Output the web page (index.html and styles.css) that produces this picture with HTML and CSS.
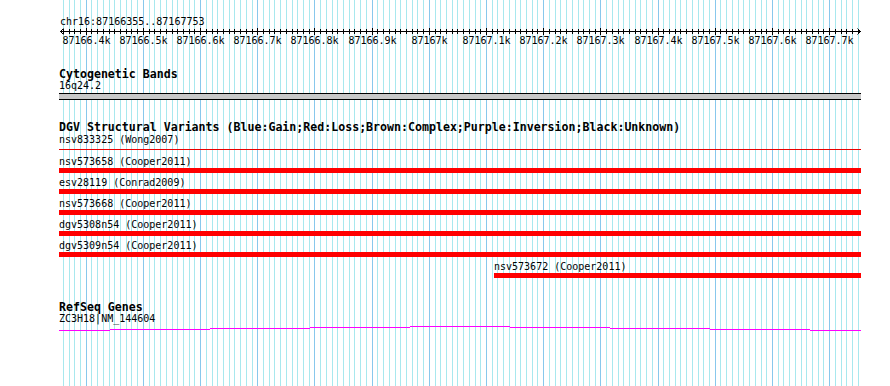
FILE: index.html
```html
<!DOCTYPE html>
<html lang="en">
<head>
  <meta charset="UTF-8" />
  <title>chr16:87166355..87167753</title>
  <link rel="stylesheet" href="styles.css">
</head>
<body>

<div class="browser">
  <svg class="grid" id="grid" width="890" height="386"></svg>

  <div class="tracks">
    <div class="ruler-track">
      <div class="loc">chr16:87166355..87167753</div>
      <svg class="ruler" id="ruler" width="803" height="19"></svg>
    </div>

    <section class="track cyto">
      <h2>Cytogenetic Bands</h2>
      <div class="label">16q24.2</div>
      <div class="band"></div>
    </section>

    <section class="track dgv">
      <h2>DGV Structural Variants (Blue:Gain;Red:Loss;Brown:Complex;Purple:Inversion;Black:Unknown)</h2>
      <div class="feature">
        <div class="label">nsv833325 (Wong2007)</div>
        <div class="bar thin"></div>
      </div>
      <div class="feature">
        <div class="label">nsv573658 (Cooper2011)</div>
        <div class="bar"></div>
      </div>
      <div class="feature">
        <div class="label">esv28119 (Conrad2009)</div>
        <div class="bar"></div>
      </div>
      <div class="feature">
        <div class="label">nsv573668 (Cooper2011)</div>
        <div class="bar"></div>
      </div>
      <div class="feature">
        <div class="label">dgv5308n54 (Cooper2011)</div>
        <div class="bar"></div>
      </div>
      <div class="feature">
        <div class="label">dgv5309n54 (Cooper2011)</div>
        <div class="bar"></div>
      </div>
      <div class="feature" style="margin-left: 435px;">
        <div class="label">nsv573672 (Cooper2011)</div>
        <div class="bar"></div>
      </div>
    </section>

    <section class="track refseq">
      <h2>RefSeq Genes</h2>
      <div class="label">ZC3H18|NM_144604</div>
      <svg class="gene" width="803" height="8" shape-rendering="crispEdges">
        <rect x="0" y="6" width="51" height="1"/>
        <rect x="51" y="5" width="100" height="1"/>
        <rect x="151" y="4" width="100" height="1"/>
        <rect x="251" y="3" width="100" height="1"/>
        <rect x="351" y="2" width="100" height="1"/>
        <rect x="451" y="3" width="100" height="1"/>
        <rect x="551" y="4" width="100" height="1"/>
        <rect x="651" y="5" width="100" height="1"/>
        <rect x="751" y="6" width="51" height="1"/>
      </svg>
    </section>
  </div>
</div>

<script src="script.js"></script>
</body>
</html>
```

FILE: styles.css
```css
body {
  margin: 0;
  background: #fff;
  color: #000;
  font-family: "DejaVu Sans Mono", monospace;
}

.browser {
  position: relative;
  width: 890px;
  height: 386px;
  overflow: hidden;
}

/* background grid, sits under the tracks */
.grid {
  position: absolute;
  left: 0;
  top: 0;
}

.grid line {
  stroke: #a8e8ee;
  stroke-width: 1;
}

.grid line.major {
  stroke: #88c8ec;
}

.tracks {
  position: relative;
  width: 802px;
  padding-left: 59px;
}

.loc {
  margin-top: 16px;
  padding-left: 1px;
  font-size: 10px;
  line-height: 12px;
}

.ruler {
  display: block;
}

.ruler line,
.ruler polyline {
  stroke: #000;
  stroke-width: 1;
  fill: none;
}

.ruler text {
  font-family: "DejaVu Sans Mono", monospace;
  font-size: 10px;
  fill: #000;
}

.track h2 {
  margin: 0;
  font-size: 11.6px;
  line-height: 12px;
  font-weight: bold;
}

.label {
  font-size: 10px;
  line-height: 12px;
  white-space: nowrap;
}

.cyto {
  margin-top: 21px;
}

.band {
  margin-top: 1px;
  height: 5px;
  background: #c8c8c8;
  border-top: 1px solid #000;
  border-bottom: 1px solid #000;
}

.dgv {
  margin-top: 21px;
}

.dgv h2 {
  margin-bottom: 2px;
}

.feature {
  padding-bottom: 5px;
}

.feature .label {
  line-height: 10px;
}

.bar {
  height: 5px;
  margin-top: 1px;
  background: #ff0000;
}

.bar.thin {
  height: 1px;
  margin: 4px 0 2px;
  background: #e80000;
}

.refseq {
  margin-top: 18px;
}

.refseq .label {
  margin-top: 1px;
  line-height: 10px;
}

.gene {
  display: block;
}

.gene rect {
  fill: #ff00ff;
}
```

FILE: script.js
```js
const start = 87166355;
const end = 87167753;
const left = 60;
const width = 800;
const svgNS = 'http://www.w3.org/2000/svg';

const grid = document.getElementById('grid');
const ruler = document.getElementById('ruler');

const toX = bp => left + (bp - start) * width / (end - start + 1);

const add = (parent, tag, attrs, text) => {
  const el = document.createElementNS(svgNS, tag);
  Object.keys(attrs).forEach(k => el.setAttribute(k, attrs[k]));
  if (text) el.textContent = text;
  parent.appendChild(el);
  return el;
};

// ruler is offset 59px from page left
const rx = x => x - 59;

add(ruler, 'line', { x1: rx(60), y1: 3.5, x2: rx(861), y2: 3.5, 'shape-rendering': 'crispEdges' });
add(ruler, 'polyline', { points: `${rx(63.5)},0.5 ${rx(60.5)},3.5 ${rx(63.5)},6.5` });
add(ruler, 'polyline', { points: `${rx(857.5)},0.5 ${rx(860.5)},3.5 ${rx(857.5)},6.5` });

for (let bp = Math.ceil(start / 10) * 10; bp <= end; bp += 10) {
  const x = Math.round(toX(bp)) + 0.5;
  const major = bp % 100 === 0;

  const gl = add(grid, 'line', { x1: x, y1: 0, x2: x, y2: 386, 'shape-rendering': 'crispEdges' });
  if (major) gl.setAttribute('class', 'major');

  add(ruler, 'line', {
    x1: rx(x), x2: rx(x),
    y1: major ? 0 : 1,
    y2: major ? 7 : 6,
    'shape-rendering': 'crispEdges'
  });

  if (major) {
    add(ruler, 'text', { x: rx(x), y: 15.5, 'text-anchor': 'middle' }, `${bp / 1000}k`);
  }
}
```
